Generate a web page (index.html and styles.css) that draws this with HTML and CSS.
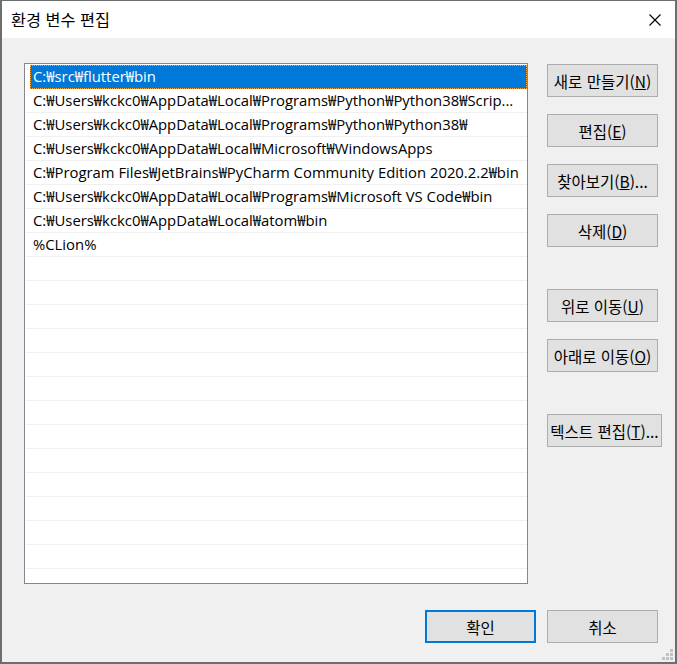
FILE: index.html
```html
<!DOCTYPE html>
<html lang="ko">
<head>
<meta charset="utf-8">
<title>환경 변수 편집</title>
<link rel="stylesheet" href="styles.css">
</head>
<body>
<div class="window">
  <div class="titlebar">
    <span class="title">환경 변수 편집</span>
    <span class="close">
      <svg width="12" height="12" viewBox="0 0 12 12"><path d="M0.5 0.5 L11.5 11.5 M11.5 0.5 L0.5 11.5" stroke="#000" stroke-width="1.1" fill="none"/></svg>
    </span>
  </div>
  <div class="content">
    <div class="main">
      <div class="list">
        <div class="row selected">C:₩src₩flutter₩bin</div>
        <div class="row">C:₩Users₩kckc0₩AppData₩Local₩Programs₩Python₩Python38₩Scrip...</div>
        <div class="row">C:₩Users₩kckc0₩AppData₩Local₩Programs₩Python₩Python38₩</div>
        <div class="row">C:₩Users₩kckc0₩AppData₩Local₩Microsoft₩WindowsApps</div>
        <div class="row">C:₩Program Files₩JetBrains₩PyCharm Community Edition 2020.2.2₩bin</div>
        <div class="row">C:₩Users₩kckc0₩AppData₩Local₩Programs₩Microsoft VS Code₩bin</div>
        <div class="row">C:₩Users₩kckc0₩AppData₩Local₩atom₩bin</div>
        <div class="row">%CLion%</div>
        <div class="row"></div><div class="row"></div><div class="row"></div><div class="row"></div>
        <div class="row"></div><div class="row"></div><div class="row"></div><div class="row"></div>
        <div class="row"></div><div class="row"></div><div class="row"></div><div class="row"></div>
        <div class="row"></div><div class="row"></div>
      </div>
      <div class="side">
        <button class="btn">새로 만들기(<u>N</u>)</button>
        <button class="btn">편집(<u>E</u>)</button>
        <button class="btn">찾아보기(<u>B</u>)...</button>
        <button class="btn">삭제(<u>D</u>)</button>
        <button class="btn group">위로 이동(<u>U</u>)</button>
        <button class="btn">아래로 이동(<u>O</u>)</button>
        <button class="btn group wide">텍스트 편집(<u>T</u>)...</button>
      </div>
    </div>
    <div class="footer">
      <button class="btn default">확인</button>
      <button class="btn">취소</button>
    </div>
    <svg class="grip" width="12" height="12" viewBox="0 0 12 12">
      <rect x="8" y="0" width="3" height="3" fill="#c2c2c2"/>
      <rect x="4" y="4" width="3" height="3" fill="#c2c2c2"/>
      <rect x="8" y="4" width="3" height="3" fill="#c2c2c2"/>
      <rect x="0" y="8" width="3" height="3" fill="#c2c2c2"/>
      <rect x="4" y="8" width="3" height="3" fill="#c2c2c2"/>
      <rect x="8" y="8" width="3" height="3" fill="#c2c2c2"/>
    </svg>
  </div>
</div>
</body>
</html>
```

FILE: styles.css
```css
html, body {
  margin: 0;
  padding: 0;
  background: #f0f0f0;
}
body {
  font-family: "Open Sans", "Noto Sans CJK KR", sans-serif;
  font-size: 14.85px;
  color: #000;
}
.window {
  width: 677px;
  height: 664px;
  box-sizing: border-box;
  border: 1px solid #6e6e6e;
  border-width: 1px 2px 2px 2px;
  display: flex;
  flex-direction: column;
  background: #f0f0f0;
}
.titlebar {
  height: 37px;
  flex: none;
  background: #fff;
  display: flex;
  align-items: center;
  justify-content: space-between;
  padding: 0 14px 0 9px;
}
.title {
  font-family: "Noto Sans CJK KR", sans-serif;
  font-size: 16.3px;
  margin-top: -1px;
}
.close {
  display: flex;
  width: 12px;
  height: 12px;
}
.content {
  flex: 1;
  position: relative;
  padding: 25px 12px 0 22px;
}
.main {
  display: flex;
  gap: 19px;
}
.list {
  flex: none;
  width: 502px;
  height: 518px;
  border: 1px solid #828790;
  background: #fff;
  padding-top: 1px;
  box-sizing: content-box;
  overflow: hidden;
}
.row {
  height: 23px;
  margin-left: 1px;
  border-bottom: 1px solid #f0f0f0;
  padding-left: 7px;
  line-height: 22px;
  white-space: nowrap;
  overflow: hidden;
}
.row.selected {
  margin-left: 5px;
  height: 22px;
  line-height: 21px;
  padding-left: 2px;
  background: #0078d7;
  color: #fff;
  border: 1px dotted #f7a53a;
}
.side {
  flex: none;
  display: flex;
  flex-direction: column;
  align-items: flex-start;
  gap: 17px;
  padding-top: 1px;
}
.btn {
  width: 111px;
  height: 33px;
  box-sizing: border-box;
  background: #e1e1e1;
  border: 1px solid #adadad;
  font-family: "Noto Sans CJK KR", sans-serif;
  font-size: 15.5px;
  color: #000;
  padding: 0;
  white-space: nowrap;
}
.btn.group {
  margin-top: 25px;
}
.btn.wide {
  width: 115px;
}
.btn.default {
  border: 2px solid #0078d7;
}
.footer {
  display: flex;
  justify-content: flex-end;
  gap: 11px;
  margin-top: 26px;
  padding-right: 5px;
}
.grip {
  position: absolute;
  right: 1px;
  bottom: 1px;
}
```
